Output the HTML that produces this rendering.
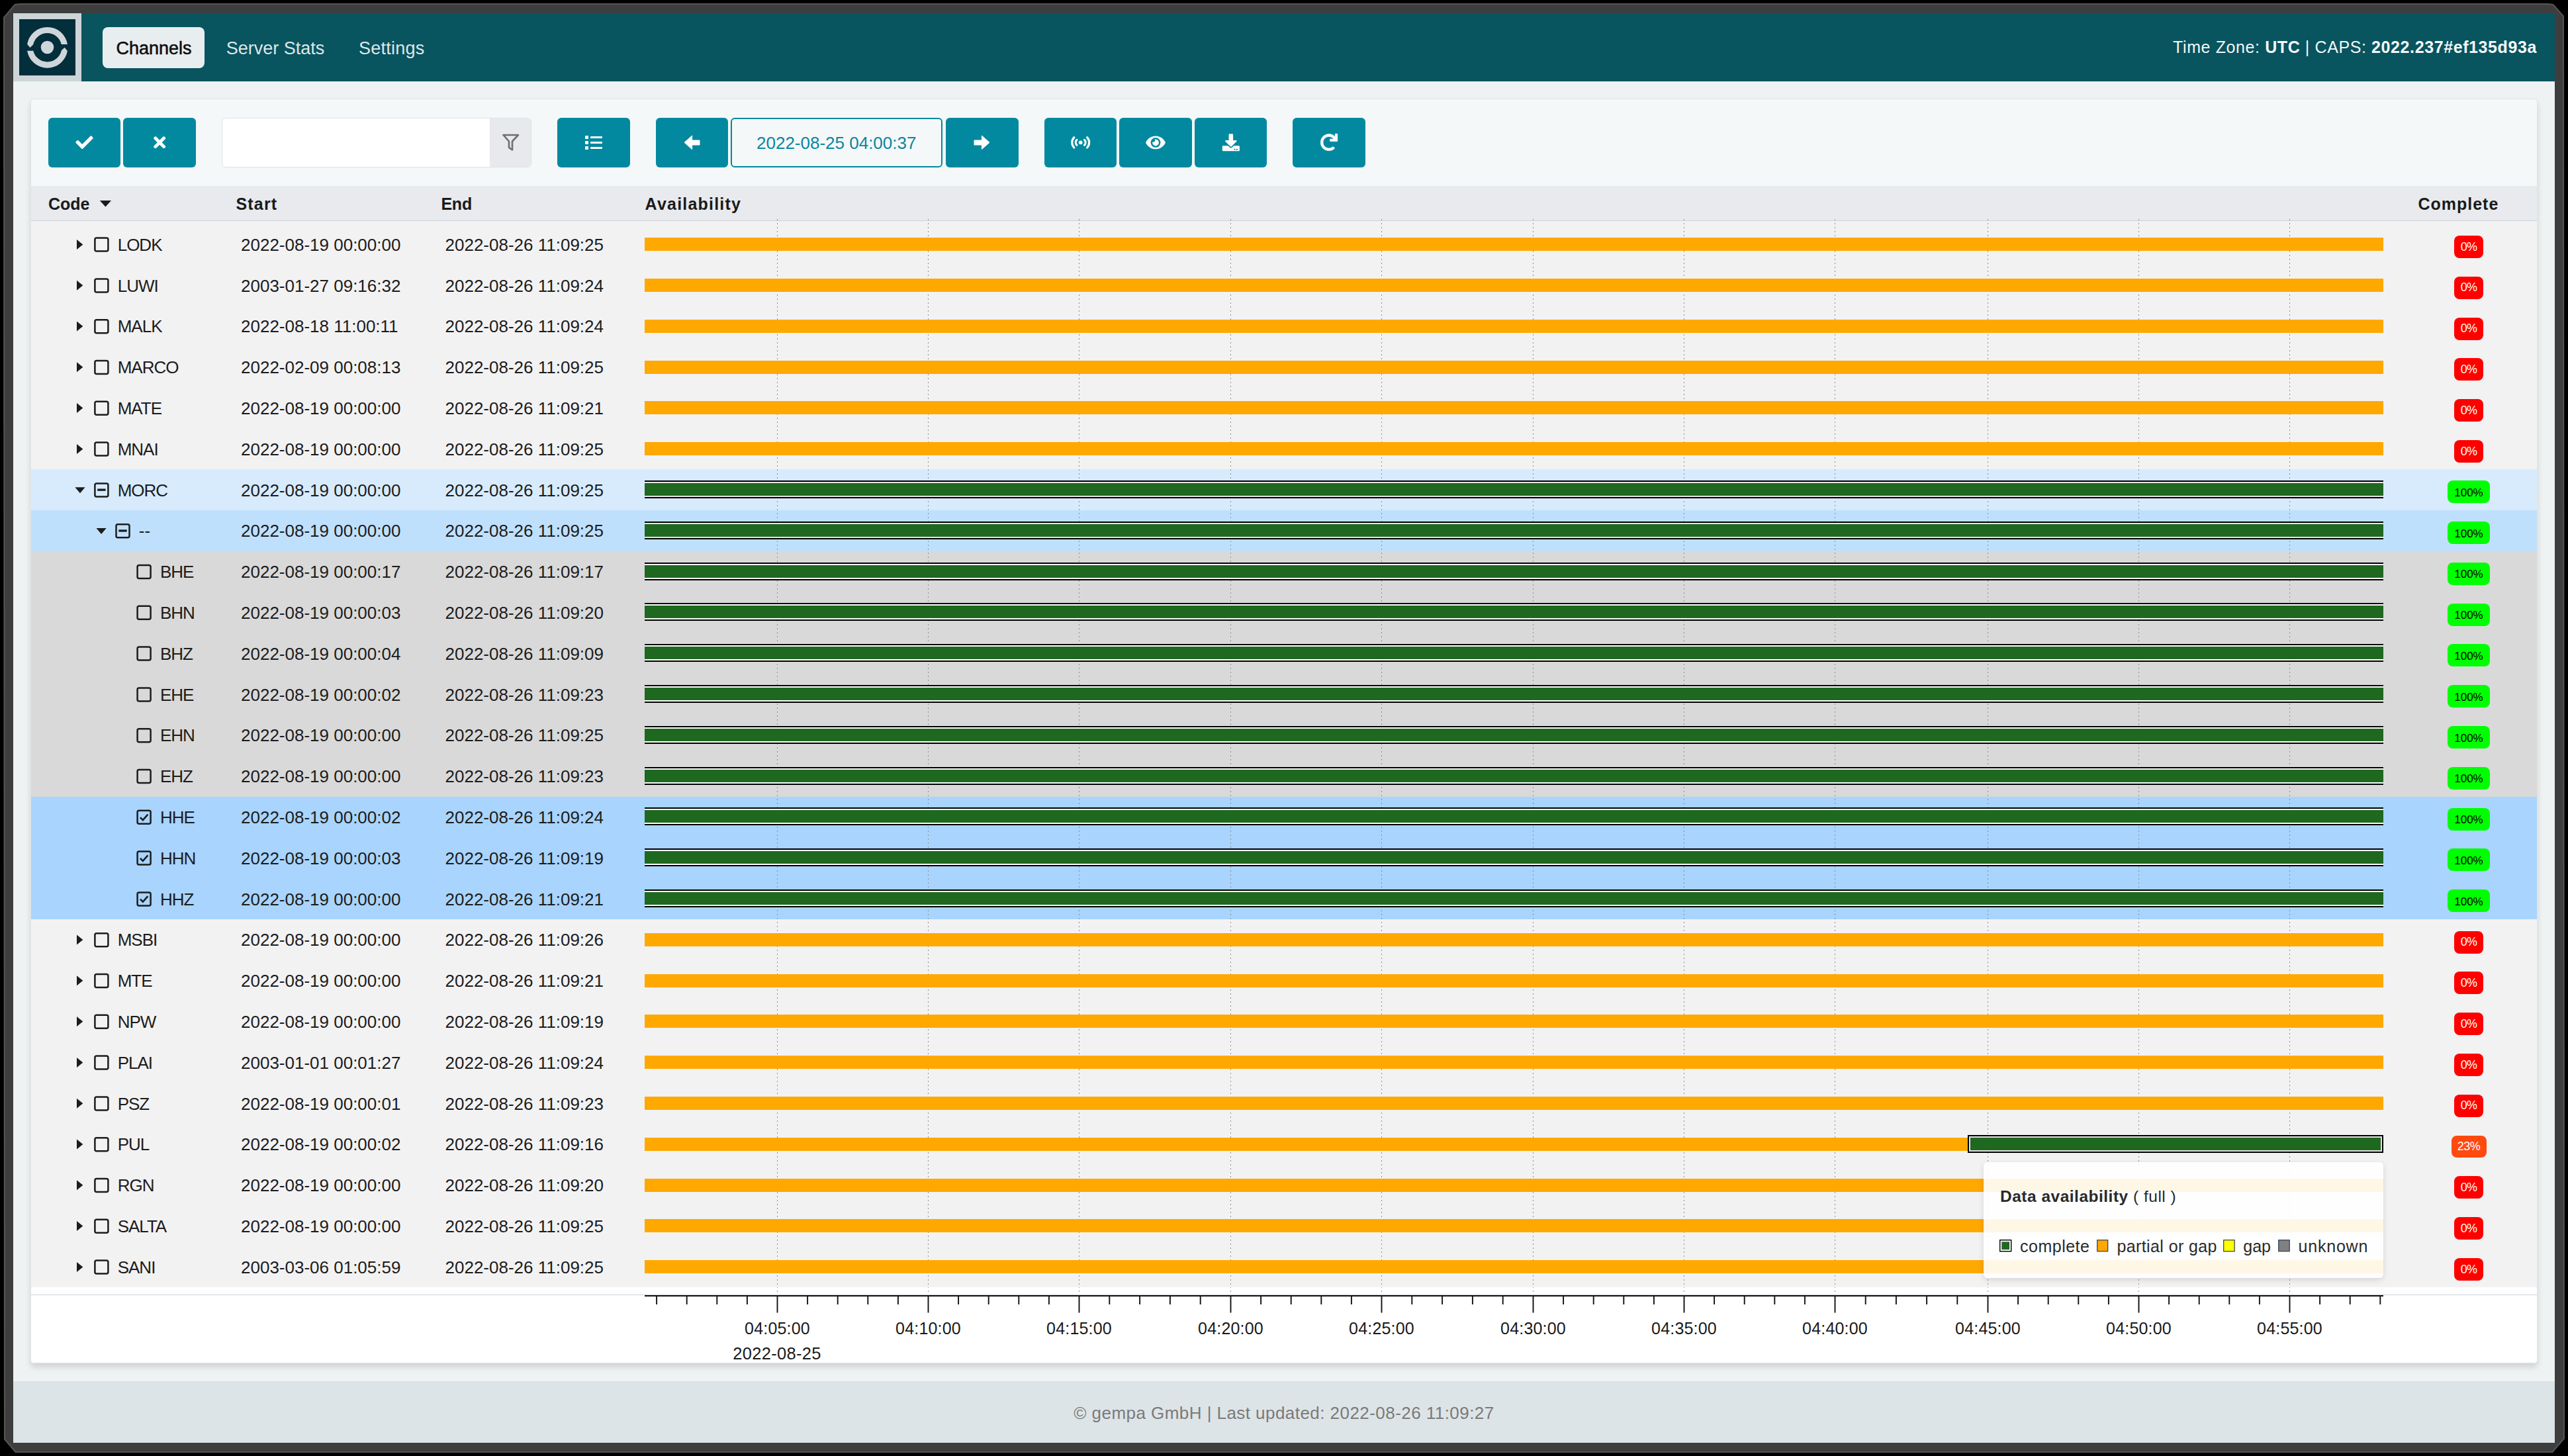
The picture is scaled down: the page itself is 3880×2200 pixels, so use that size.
<!DOCTYPE html><html><head><meta charset="utf-8"><title>Channels</title><style>
html,body{margin:0;padding:0;width:3880px;height:2200px;overflow:hidden;background:#000;font-family:"Liberation Sans", sans-serif;}
.t{position:absolute;white-space:nowrap;}
.r{position:absolute;}
svg{position:absolute;overflow:visible;}
</style></head><body>
<svg style="left:0;top:0" width="3880" height="2200" viewBox="0 0 3880 2200"><polygon points="5,26 22,6 31,5 3849,5 3858,6 3874,24 3875,2174 3857,2195 23,2195 6,2175" fill="#555"/><polygon points="7,27 23,8 32,7 3848,7 3857,8 3872,25 3873,2173 3856,2193 24,2193 8,2174" fill="#3e3e3e"/></svg>
<div class="r" style="left:20px;top:20px;width:3840px;height:2160px;background:#eef2f2;"></div>
<div class="r" style="left:20px;top:20px;width:3840px;height:103px;background:#08545f;"></div>
<div class="r" style="left:20px;top:20px;width:103px;height:103px;background:#cdd5d8;"></div>
<div class="r" style="left:29px;top:29px;width:85px;height:85px;background:#032e3b;"></div>
<svg style="left:0;top:0" width="3880" height="130" viewBox="0 0 3880 130">
<g fill="#cfd6d9">
<path d="M 101.9 66.9 A 30.8 30.8 0 0 0 41.1 66.7 L 45.4 71.9 L 50.2 67.3 A 21.8 21.8 0 0 1 92.74 66.9 Z"/>
<path d="M 41.1 76.7 A 30.8 30.8 0 0 0 101.9 76.9 L 97.6 71.7 L 92.8 76.3 A 21.8 21.8 0 0 1 50.26 76.7 Z"/>
</g>
<circle cx="71.5" cy="71.5" r="9.8" fill="#cfd6d9"/>
</svg>
<div class="r" style="left:155px;top:41px;width:154px;height:62px;background:#e8eef0;border-radius:8px;"></div>
<div class="t" style="left:175.5px;top:59.54px;font-size:27px;line-height:27px;color:#0d0d0d;font-weight:400;letter-spacing:0px;-webkit-text-stroke:0.55px #0d0d0d;">Channels</div>
<div class="t" style="left:341.8px;top:59.54px;font-size:27px;line-height:27px;color:#dfe6e8;font-weight:400;letter-spacing:0px;">Server Stats</div>
<div class="t" style="left:542px;top:59.54px;font-size:27px;line-height:27px;color:#dfe6e8;font-weight:400;letter-spacing:0.25px;">Settings</div>
<div class="t" style="right:47px;top:59.44px;font-size:25px;line-height:25px;color:#f4f7f8;font-weight:400;letter-spacing:0.6px;">Time Zone: <b>UTC</b> | CAPS: <b>2022.237#ef135d93a</b></div>
<div class="r" style="left:46px;top:149px;width:3788px;height:1911px;background:#f4f8f8;border:1px solid #e2e4e8;box-sizing:border-box;border-radius:5px;box-shadow:0 6px 10px rgba(0,0,0,0.13);"></div>
<div class="r" style="left:73px;top:178px;width:109px;height:75px;background:#0289a0;border-radius:6px;"></div>
<div class="r" style="left:186px;top:178px;width:110px;height:75px;background:#0289a0;border-radius:6px;"></div>
<div class="r" style="left:335px;top:178px;width:468px;height:75px;background:#ffffff;border:1px solid #dfe2e6;box-sizing:border-box;border-radius:6px;"></div>
<div class="r" style="left:740px;top:179px;width:62px;height:73px;background:#e8e9ed;border-radius:0 5px 5px 0;"></div>
<div class="r" style="left:842px;top:178px;width:110px;height:75px;background:#0289a0;border-radius:6px;"></div>
<div class="r" style="left:991px;top:178px;width:109px;height:75px;background:#0289a0;border-radius:6px;"></div>
<div class="r" style="left:1104px;top:178px;width:320px;height:75px;background:#f4f8f8;border:2px solid #0289a0;box-sizing:border-box;border-radius:6px;"></div>
<div class="t" style="left:1143px;top:202.79px;font-size:26px;line-height:26px;color:#0a86a0;font-weight:400;letter-spacing:0px;">2022-08-25 04:00:37</div>
<div class="r" style="left:1429px;top:178px;width:110px;height:75px;background:#0289a0;border-radius:6px;"></div>
<div class="r" style="left:1578px;top:178px;width:109px;height:75px;background:#0289a0;border-radius:6px;"></div>
<div class="r" style="left:1691px;top:178px;width:110px;height:75px;background:#0289a0;border-radius:6px;"></div>
<div class="r" style="left:1805px;top:178px;width:109px;height:75px;background:#0289a0;border-radius:6px;"></div>
<div class="r" style="left:1953px;top:178px;width:110px;height:75px;background:#0289a0;border-radius:6px;"></div>
<svg style="left:0;top:0" width="3880" height="300" viewBox="0 0 3880 300">
<path transform="translate(114.3,202.0) scale(0.0515)" fill="#fff" d="M173.898 439.404l-166.4-166.4c-9.997-9.997-9.997-26.206 0-36.204l36.203-36.204c9.997-9.998 26.207-9.998 36.204 0L192 312.69 432.095 72.596c9.997-9.997 26.207-9.997 36.204 0l36.203 36.204c9.997 9.997 9.997 26.206 0 36.204l-294.4 294.401c-9.998 9.997-26.207 9.997-36.204-.001z"/>
<path transform="translate(232.1,202.0) scale(0.0517)" fill="#fff" d="M242.72 256l100.07-100.07c12.28-12.28 12.28-32.19 0-44.48l-22.24-22.24c-12.28-12.28-32.19-12.28-44.48 0L176 189.28 75.93 89.21c-12.28-12.28-32.19-12.28-44.48 0L9.21 111.45c-12.28 12.28-12.28 32.19 0 44.48L109.28 256 9.21 356.07c-12.28 12.28-12.28 32.19 0 44.48l22.24 22.240c12.28 12.28 32.2 12.28 44.48 0L176 322.72l100.07 100.07c12.28 12.28 32.2 12.28 44.48 0l22.24-22.24c12.28-12.28 12.28-32.19 0-44.48L242.72 256z"/>
<path d="M 760.5 204 L 783 204 L 774 213.5 L 774 226.5 L 769 223 L 769 213.5 Z" fill="none" stroke="#6f6f6f" stroke-width="2.6" stroke-linejoin="round"/>
<g fill="#fff"><rect x="884" y="205" width="5" height="5" rx="0.8"/><rect x="884" y="213" width="5" height="5" rx="0.8"/><rect x="884" y="221" width="5" height="5" rx="0.8"/>
<rect x="892" y="206" width="18" height="3" rx="1"/><rect x="892" y="214" width="18" height="3" rx="1"/><rect x="892" y="222" width="18" height="3" rx="1"/></g>
<polygon points="1034,215.3 1045.6,205 1045.6,212 1057,212 1057,219 1045.6,219 1045.6,225.6" fill="#fff" stroke="#fff" stroke-width="1" stroke-linejoin="round"/>
<polygon points="1495,215.3 1483.4,205 1483.4,212 1472,212 1472,219 1483.4,219 1483.4,225.6" fill="#fff" stroke="#fff" stroke-width="1" stroke-linejoin="round"/>
<g fill="none" stroke="#fff" stroke-width="3.2" stroke-linecap="round">
<path d="M 1622.8 207.6 A 11.3 11.3 0 0 0 1622.8 223"/>
<path d="M 1626.9 211.4 A 5.6 5.6 0 0 0 1626.9 219.2"/>
<path d="M 1642.6 207.6 A 11.3 11.3 0 0 1 1642.6 223"/>
<path d="M 1638.5 211.4 A 5.6 5.6 0 0 1 1638.5 219.2"/>
</g>
<circle cx="1632.7" cy="215.3" r="2.9" fill="#fff"/>
<path transform="translate(1731.2,202.3) scale(0.0514)" fill="#fff" d="M572.52 241.4C518.29 135.59 410.93 64 288 64S57.68 135.64 3.48 241.41a32.35 32.35 0 0 0 0 29.19C57.71 376.41 165.07 448 288 448s230.32-71.64 284.52-177.41a32.35 32.350 0 0 0 0-29.19zM288 400a144 144 0 1 1 144-144 143.93 143.93 0 0 1-144 144zm0-240a95.31 95.31 0 0 0-25.31 3.790 47.85 47.85 0 0 1-66.9 66.9A95.78 95.78 0 1 0 288 160z"/>
<path transform="translate(1846.8,202.2) scale(0.0510)" fill="#fff" d="M216 0h80c13.3 0 24 10.7 24 24v168h87.7c17.8 0 26.7 21.5 14.1 34.1L269.7 378.3c-7.5 7.5-19.8 7.5-27.3 0L90.1 226.1c-12.6-12.6-3.7-34.1 14.1-34.1H192V24c0-13.3 10.7-24 24-24zm296 376v112c0 13.3-10.7 24-24 24H24c-13.3 0-24-10.7-24-24V376c0-13.3 10.7-24 24-24h146.7l49 49c20.1 20.1 52.5 20.1 72.6 0l49-49H488c13.3 0 24 10.7 24 24zm-124 88c0-11-9-20-20-20s-20 9-20 20 9 20 20 20 20-9 20-20zm64 0c0-11-9-20-20-20s-20 9-20 20 9 20 20 20 20-9 20-20z"/>
<path transform="translate(1994.9,202.2) scale(0.0506)" fill="#fff" stroke="#fff" stroke-width="14" d="M500.33 0h-47.41a12 12 0 0 0-12 12.57l4 82.76A247.42 247.42 0 0 0 256 8C119.34 8 7.9 119.53 8 256.19 8.1 393.07 119.1 504 256 504a247.1 247.1 0 0 0 166.18-63.910 12 12 0 0 0 .48-17.43l-34-34a12 12 0 0 0-16.38-.55A176 176 0 1 1 402.1 157.8l-101.53-4.87a12 12 0 0 0-12.57 12v47.41a12 12 0 0 0 12 12h200.33a12 12 0 0 0 12-12V12a12 12 0 0 0-12-12z"/>
</svg>
<div class="r" style="left:47px;top:281px;width:3786px;height:52px;background:#e8eaee;"></div>
<div class="r" style="left:47px;top:333px;width:3786px;height:1px;background:#cdd3da;"></div>
<div class="t" style="left:73px;top:295.84px;font-size:25px;line-height:25px;color:#1a1a1a;font-weight:700;letter-spacing:0px;">Code</div>
<svg style="left:0;top:0" width="200" height="330"><polygon points="150.8,303 168,303 159.4,312.5" fill="#1a1a1a"/></svg>
<div class="t" style="left:356.4px;top:295.84px;font-size:25px;line-height:25px;color:#1a1a1a;font-weight:700;letter-spacing:1.2px;">Start</div>
<div class="t" style="left:666.4px;top:295.84px;font-size:25px;line-height:25px;color:#1a1a1a;font-weight:700;letter-spacing:-0.2px;">End</div>
<div class="t" style="left:974.6px;top:295.84px;font-size:25px;line-height:25px;color:#1a1a1a;font-weight:700;letter-spacing:1.2px;">Availability</div>
<div class="t" style="left:3653.4px;top:295.84px;font-size:25px;line-height:25px;color:#1a1a1a;font-weight:700;letter-spacing:1.0px;">Complete</div>
<div class="r" style="left:47px;top:334px;width:3786px;height:1611px;background:#f2f2f3;"></div>
<div class="r" style="left:47px;top:709px;width:3786px;height:62px;background:#d7ebfd;"></div>
<div class="r" style="left:47px;top:771px;width:3786px;height:62px;background:#bfe0fc;"></div>
<div class="r" style="left:47px;top:833px;width:3786px;height:62px;background:#d9d9d9;"></div>
<div class="r" style="left:47px;top:895px;width:3786px;height:61px;background:#d9d9d9;"></div>
<div class="r" style="left:47px;top:956px;width:3786px;height:62px;background:#d9d9d9;"></div>
<div class="r" style="left:47px;top:1018px;width:3786px;height:62px;background:#d9d9d9;"></div>
<div class="r" style="left:47px;top:1080px;width:3786px;height:62px;background:#d9d9d9;"></div>
<div class="r" style="left:47px;top:1142px;width:3786px;height:62px;background:#d9d9d9;"></div>
<div class="r" style="left:47px;top:1204px;width:3786px;height:62px;background:#a8d4fd;"></div>
<div class="r" style="left:47px;top:1266px;width:3786px;height:61px;background:#a8d4fd;"></div>
<div class="r" style="left:47px;top:1327px;width:3786px;height:62px;background:#a8d4fd;"></div>
<div class="r" style="left:1174px;top:331px;width:1px;height:1626px;background:repeating-linear-gradient(to bottom,#8e8e8e 0 2px,transparent 2px 6px);"></div>
<div class="r" style="left:1402px;top:331px;width:1px;height:1626px;background:repeating-linear-gradient(to bottom,#8e8e8e 0 2px,transparent 2px 6px);"></div>
<div class="r" style="left:1630px;top:331px;width:1px;height:1626px;background:repeating-linear-gradient(to bottom,#8e8e8e 0 2px,transparent 2px 6px);"></div>
<div class="r" style="left:1859px;top:331px;width:1px;height:1626px;background:repeating-linear-gradient(to bottom,#8e8e8e 0 2px,transparent 2px 6px);"></div>
<div class="r" style="left:2087px;top:331px;width:1px;height:1626px;background:repeating-linear-gradient(to bottom,#8e8e8e 0 2px,transparent 2px 6px);"></div>
<div class="r" style="left:2316px;top:331px;width:1px;height:1626px;background:repeating-linear-gradient(to bottom,#8e8e8e 0 2px,transparent 2px 6px);"></div>
<div class="r" style="left:2544px;top:331px;width:1px;height:1626px;background:repeating-linear-gradient(to bottom,#8e8e8e 0 2px,transparent 2px 6px);"></div>
<div class="r" style="left:2772px;top:331px;width:1px;height:1626px;background:repeating-linear-gradient(to bottom,#8e8e8e 0 2px,transparent 2px 6px);"></div>
<div class="r" style="left:3003px;top:331px;width:1px;height:1626px;background:repeating-linear-gradient(to bottom,#8e8e8e 0 2px,transparent 2px 6px);"></div>
<div class="r" style="left:3231px;top:331px;width:1px;height:1626px;background:repeating-linear-gradient(to bottom,#8e8e8e 0 2px,transparent 2px 6px);"></div>
<div class="r" style="left:3459px;top:331px;width:1px;height:1626px;background:repeating-linear-gradient(to bottom,#8e8e8e 0 2px,transparent 2px 6px);"></div>
<div class="t" style="left:177.7px;top:356.89px;font-size:26px;line-height:26px;color:#1c1c1c;font-weight:400;letter-spacing:-1px;">LODK</div>
<div class="t" style="left:364px;top:356.89px;font-size:26px;line-height:26px;color:#1c1c1c;font-weight:400;letter-spacing:0px;">2022-08-19 00:00:00</div>
<div class="t" style="left:672.5px;top:356.89px;font-size:26px;line-height:26px;color:#1c1c1c;font-weight:400;letter-spacing:0px;">2022-08-26 11:09:25</div>
<div class="r" style="left:974px;top:359.1px;width:2627px;height:20px;background:#ffa800;"></div>
<div class="r" style="left:3708px;top:355.9px;width:44px;height:34px;background:#ff0000;border-radius:8px;"></div>
<div class="t" style="left:3730px;transform:translateX(-50%);top:363.66px;font-size:18px;line-height:18px;color:#fff;font-weight:400;letter-spacing:-0.8px;">0%</div>
<div class="t" style="left:177.7px;top:418.69px;font-size:26px;line-height:26px;color:#1c1c1c;font-weight:400;letter-spacing:-1px;">LUWI</div>
<div class="t" style="left:364px;top:418.69px;font-size:26px;line-height:26px;color:#1c1c1c;font-weight:400;letter-spacing:0px;">2003-01-27 09:16:32</div>
<div class="t" style="left:672.5px;top:418.69px;font-size:26px;line-height:26px;color:#1c1c1c;font-weight:400;letter-spacing:0px;">2022-08-26 11:09:24</div>
<div class="r" style="left:974px;top:420.9px;width:2627px;height:20px;background:#ffa800;"></div>
<div class="r" style="left:3708px;top:417.7px;width:44px;height:34px;background:#ff0000;border-radius:8px;"></div>
<div class="t" style="left:3730px;transform:translateX(-50%);top:425.46px;font-size:18px;line-height:18px;color:#fff;font-weight:400;letter-spacing:-0.8px;">0%</div>
<div class="t" style="left:177.7px;top:480.49px;font-size:26px;line-height:26px;color:#1c1c1c;font-weight:400;letter-spacing:-1px;">MALK</div>
<div class="t" style="left:364px;top:480.49px;font-size:26px;line-height:26px;color:#1c1c1c;font-weight:400;letter-spacing:0px;">2022-08-18 11:00:11</div>
<div class="t" style="left:672.5px;top:480.49px;font-size:26px;line-height:26px;color:#1c1c1c;font-weight:400;letter-spacing:0px;">2022-08-26 11:09:24</div>
<div class="r" style="left:974px;top:482.7px;width:2627px;height:20px;background:#ffa800;"></div>
<div class="r" style="left:3708px;top:479.5px;width:44px;height:34px;background:#ff0000;border-radius:8px;"></div>
<div class="t" style="left:3730px;transform:translateX(-50%);top:487.26px;font-size:18px;line-height:18px;color:#fff;font-weight:400;letter-spacing:-0.8px;">0%</div>
<div class="t" style="left:177.7px;top:542.29px;font-size:26px;line-height:26px;color:#1c1c1c;font-weight:400;letter-spacing:-1px;">MARCO</div>
<div class="t" style="left:364px;top:542.29px;font-size:26px;line-height:26px;color:#1c1c1c;font-weight:400;letter-spacing:0px;">2022-02-09 00:08:13</div>
<div class="t" style="left:672.5px;top:542.29px;font-size:26px;line-height:26px;color:#1c1c1c;font-weight:400;letter-spacing:0px;">2022-08-26 11:09:25</div>
<div class="r" style="left:974px;top:544.5px;width:2627px;height:20px;background:#ffa800;"></div>
<div class="r" style="left:3708px;top:541.3px;width:44px;height:34px;background:#ff0000;border-radius:8px;"></div>
<div class="t" style="left:3730px;transform:translateX(-50%);top:549.06px;font-size:18px;line-height:18px;color:#fff;font-weight:400;letter-spacing:-0.8px;">0%</div>
<div class="t" style="left:177.7px;top:604.09px;font-size:26px;line-height:26px;color:#1c1c1c;font-weight:400;letter-spacing:-1px;">MATE</div>
<div class="t" style="left:364px;top:604.09px;font-size:26px;line-height:26px;color:#1c1c1c;font-weight:400;letter-spacing:0px;">2022-08-19 00:00:00</div>
<div class="t" style="left:672.5px;top:604.09px;font-size:26px;line-height:26px;color:#1c1c1c;font-weight:400;letter-spacing:0px;">2022-08-26 11:09:21</div>
<div class="r" style="left:974px;top:606.3px;width:2627px;height:20px;background:#ffa800;"></div>
<div class="r" style="left:3708px;top:603.1px;width:44px;height:34px;background:#ff0000;border-radius:8px;"></div>
<div class="t" style="left:3730px;transform:translateX(-50%);top:610.86px;font-size:18px;line-height:18px;color:#fff;font-weight:400;letter-spacing:-0.8px;">0%</div>
<div class="t" style="left:177.7px;top:665.89px;font-size:26px;line-height:26px;color:#1c1c1c;font-weight:400;letter-spacing:-1px;">MNAI</div>
<div class="t" style="left:364px;top:665.89px;font-size:26px;line-height:26px;color:#1c1c1c;font-weight:400;letter-spacing:0px;">2022-08-19 00:00:00</div>
<div class="t" style="left:672.5px;top:665.89px;font-size:26px;line-height:26px;color:#1c1c1c;font-weight:400;letter-spacing:0px;">2022-08-26 11:09:25</div>
<div class="r" style="left:974px;top:668.1px;width:2627px;height:20px;background:#ffa800;"></div>
<div class="r" style="left:3708px;top:664.9px;width:44px;height:34px;background:#ff0000;border-radius:8px;"></div>
<div class="t" style="left:3730px;transform:translateX(-50%);top:672.66px;font-size:18px;line-height:18px;color:#fff;font-weight:400;letter-spacing:-0.8px;">0%</div>
<div class="t" style="left:177.7px;top:727.69px;font-size:26px;line-height:26px;color:#1c1c1c;font-weight:400;letter-spacing:-1px;">MORC</div>
<div class="t" style="left:364px;top:727.69px;font-size:26px;line-height:26px;color:#1c1c1c;font-weight:400;letter-spacing:0px;">2022-08-19 00:00:00</div>
<div class="t" style="left:672.5px;top:727.69px;font-size:26px;line-height:26px;color:#1c1c1c;font-weight:400;letter-spacing:0px;">2022-08-26 11:09:25</div>
<div class="r" style="left:974px;top:725.9px;width:2627px;height:27px;background:linear-gradient(to bottom,#000 0 2px,#e9e5e5 2px 4px,#1f6820 4px 23px,#e9e5e5 23px 25px,#000 25px 27px);"></div>
<div class="r" style="left:3698px;top:726.2px;width:64px;height:34px;background:#00ff00;border-radius:8px;"></div>
<div class="t" style="left:3730px;transform:translateX(-50%);top:735.81px;font-size:17px;line-height:17px;color:#000;font-weight:400;letter-spacing:0px;">100%</div>
<div class="t" style="left:209.8px;top:789.49px;font-size:26px;line-height:26px;color:#1c1c1c;font-weight:400;letter-spacing:0px;">--</div>
<div class="t" style="left:364px;top:789.49px;font-size:26px;line-height:26px;color:#1c1c1c;font-weight:400;letter-spacing:0px;">2022-08-19 00:00:00</div>
<div class="t" style="left:672.5px;top:789.49px;font-size:26px;line-height:26px;color:#1c1c1c;font-weight:400;letter-spacing:0px;">2022-08-26 11:09:25</div>
<div class="r" style="left:974px;top:787.7px;width:2627px;height:27px;background:linear-gradient(to bottom,#000 0 2px,#e9e5e5 2px 4px,#1f6820 4px 23px,#e9e5e5 23px 25px,#000 25px 27px);"></div>
<div class="r" style="left:3698px;top:788.0px;width:64px;height:34px;background:#00ff00;border-radius:8px;"></div>
<div class="t" style="left:3730px;transform:translateX(-50%);top:797.61px;font-size:17px;line-height:17px;color:#000;font-weight:400;letter-spacing:0px;">100%</div>
<div class="t" style="left:241.9px;top:851.29px;font-size:26px;line-height:26px;color:#1c1c1c;font-weight:400;letter-spacing:-1px;">BHE</div>
<div class="t" style="left:364px;top:851.29px;font-size:26px;line-height:26px;color:#1c1c1c;font-weight:400;letter-spacing:0px;">2022-08-19 00:00:17</div>
<div class="t" style="left:672.5px;top:851.29px;font-size:26px;line-height:26px;color:#1c1c1c;font-weight:400;letter-spacing:0px;">2022-08-26 11:09:17</div>
<div class="r" style="left:974px;top:849.5px;width:2627px;height:27px;background:linear-gradient(to bottom,#000 0 2px,#ffffff 2px 4px,#1f6820 4px 23px,#ffffff 23px 25px,#000 25px 27px);"></div>
<div class="r" style="left:3698px;top:849.8px;width:64px;height:34px;background:#00ff00;border-radius:8px;"></div>
<div class="t" style="left:3730px;transform:translateX(-50%);top:859.41px;font-size:17px;line-height:17px;color:#000;font-weight:400;letter-spacing:0px;">100%</div>
<div class="t" style="left:241.9px;top:913.09px;font-size:26px;line-height:26px;color:#1c1c1c;font-weight:400;letter-spacing:-1px;">BHN</div>
<div class="t" style="left:364px;top:913.09px;font-size:26px;line-height:26px;color:#1c1c1c;font-weight:400;letter-spacing:0px;">2022-08-19 00:00:03</div>
<div class="t" style="left:672.5px;top:913.09px;font-size:26px;line-height:26px;color:#1c1c1c;font-weight:400;letter-spacing:0px;">2022-08-26 11:09:20</div>
<div class="r" style="left:974px;top:911.3px;width:2627px;height:27px;background:linear-gradient(to bottom,#000 0 2px,#ffffff 2px 4px,#1f6820 4px 23px,#ffffff 23px 25px,#000 25px 27px);"></div>
<div class="r" style="left:3698px;top:911.6px;width:64px;height:34px;background:#00ff00;border-radius:8px;"></div>
<div class="t" style="left:3730px;transform:translateX(-50%);top:921.21px;font-size:17px;line-height:17px;color:#000;font-weight:400;letter-spacing:0px;">100%</div>
<div class="t" style="left:241.9px;top:974.89px;font-size:26px;line-height:26px;color:#1c1c1c;font-weight:400;letter-spacing:-1px;">BHZ</div>
<div class="t" style="left:364px;top:974.89px;font-size:26px;line-height:26px;color:#1c1c1c;font-weight:400;letter-spacing:0px;">2022-08-19 00:00:04</div>
<div class="t" style="left:672.5px;top:974.89px;font-size:26px;line-height:26px;color:#1c1c1c;font-weight:400;letter-spacing:0px;">2022-08-26 11:09:09</div>
<div class="r" style="left:974px;top:973.1px;width:2627px;height:27px;background:linear-gradient(to bottom,#000 0 2px,#ffffff 2px 4px,#1f6820 4px 23px,#ffffff 23px 25px,#000 25px 27px);"></div>
<div class="r" style="left:3698px;top:973.4px;width:64px;height:34px;background:#00ff00;border-radius:8px;"></div>
<div class="t" style="left:3730px;transform:translateX(-50%);top:983.01px;font-size:17px;line-height:17px;color:#000;font-weight:400;letter-spacing:0px;">100%</div>
<div class="t" style="left:241.9px;top:1036.69px;font-size:26px;line-height:26px;color:#1c1c1c;font-weight:400;letter-spacing:-1px;">EHE</div>
<div class="t" style="left:364px;top:1036.69px;font-size:26px;line-height:26px;color:#1c1c1c;font-weight:400;letter-spacing:0px;">2022-08-19 00:00:02</div>
<div class="t" style="left:672.5px;top:1036.69px;font-size:26px;line-height:26px;color:#1c1c1c;font-weight:400;letter-spacing:0px;">2022-08-26 11:09:23</div>
<div class="r" style="left:974px;top:1034.9px;width:2627px;height:27px;background:linear-gradient(to bottom,#000 0 2px,#ffffff 2px 4px,#1f6820 4px 23px,#ffffff 23px 25px,#000 25px 27px);"></div>
<div class="r" style="left:3698px;top:1035.2px;width:64px;height:34px;background:#00ff00;border-radius:8px;"></div>
<div class="t" style="left:3730px;transform:translateX(-50%);top:1044.81px;font-size:17px;line-height:17px;color:#000;font-weight:400;letter-spacing:0px;">100%</div>
<div class="t" style="left:241.9px;top:1098.49px;font-size:26px;line-height:26px;color:#1c1c1c;font-weight:400;letter-spacing:-1px;">EHN</div>
<div class="t" style="left:364px;top:1098.49px;font-size:26px;line-height:26px;color:#1c1c1c;font-weight:400;letter-spacing:0px;">2022-08-19 00:00:00</div>
<div class="t" style="left:672.5px;top:1098.49px;font-size:26px;line-height:26px;color:#1c1c1c;font-weight:400;letter-spacing:0px;">2022-08-26 11:09:25</div>
<div class="r" style="left:974px;top:1096.7px;width:2627px;height:27px;background:linear-gradient(to bottom,#000 0 2px,#ffffff 2px 4px,#1f6820 4px 23px,#ffffff 23px 25px,#000 25px 27px);"></div>
<div class="r" style="left:3698px;top:1097.0px;width:64px;height:34px;background:#00ff00;border-radius:8px;"></div>
<div class="t" style="left:3730px;transform:translateX(-50%);top:1106.61px;font-size:17px;line-height:17px;color:#000;font-weight:400;letter-spacing:0px;">100%</div>
<div class="t" style="left:241.9px;top:1160.29px;font-size:26px;line-height:26px;color:#1c1c1c;font-weight:400;letter-spacing:-1px;">EHZ</div>
<div class="t" style="left:364px;top:1160.29px;font-size:26px;line-height:26px;color:#1c1c1c;font-weight:400;letter-spacing:0px;">2022-08-19 00:00:00</div>
<div class="t" style="left:672.5px;top:1160.29px;font-size:26px;line-height:26px;color:#1c1c1c;font-weight:400;letter-spacing:0px;">2022-08-26 11:09:23</div>
<div class="r" style="left:974px;top:1158.5px;width:2627px;height:27px;background:linear-gradient(to bottom,#000 0 2px,#ffffff 2px 4px,#1f6820 4px 23px,#ffffff 23px 25px,#000 25px 27px);"></div>
<div class="r" style="left:3698px;top:1158.8px;width:64px;height:34px;background:#00ff00;border-radius:8px;"></div>
<div class="t" style="left:3730px;transform:translateX(-50%);top:1168.41px;font-size:17px;line-height:17px;color:#000;font-weight:400;letter-spacing:0px;">100%</div>
<div class="t" style="left:241.9px;top:1222.09px;font-size:26px;line-height:26px;color:#1c1c1c;font-weight:400;letter-spacing:-1px;">HHE</div>
<div class="t" style="left:364px;top:1222.09px;font-size:26px;line-height:26px;color:#1c1c1c;font-weight:400;letter-spacing:0px;">2022-08-19 00:00:02</div>
<div class="t" style="left:672.5px;top:1222.09px;font-size:26px;line-height:26px;color:#1c1c1c;font-weight:400;letter-spacing:0px;">2022-08-26 11:09:24</div>
<div class="r" style="left:974px;top:1220.3px;width:2627px;height:27px;background:linear-gradient(to bottom,#000 0 2px,#ffffff 2px 4px,#1f6820 4px 23px,#ffffff 23px 25px,#000 25px 27px);"></div>
<div class="r" style="left:3698px;top:1220.6px;width:64px;height:34px;background:#00ff00;border-radius:8px;"></div>
<div class="t" style="left:3730px;transform:translateX(-50%);top:1230.21px;font-size:17px;line-height:17px;color:#000;font-weight:400;letter-spacing:0px;">100%</div>
<div class="t" style="left:241.9px;top:1283.89px;font-size:26px;line-height:26px;color:#1c1c1c;font-weight:400;letter-spacing:-1px;">HHN</div>
<div class="t" style="left:364px;top:1283.89px;font-size:26px;line-height:26px;color:#1c1c1c;font-weight:400;letter-spacing:0px;">2022-08-19 00:00:03</div>
<div class="t" style="left:672.5px;top:1283.89px;font-size:26px;line-height:26px;color:#1c1c1c;font-weight:400;letter-spacing:0px;">2022-08-26 11:09:19</div>
<div class="r" style="left:974px;top:1282.1px;width:2627px;height:27px;background:linear-gradient(to bottom,#000 0 2px,#ffffff 2px 4px,#1f6820 4px 23px,#ffffff 23px 25px,#000 25px 27px);"></div>
<div class="r" style="left:3698px;top:1282.4px;width:64px;height:34px;background:#00ff00;border-radius:8px;"></div>
<div class="t" style="left:3730px;transform:translateX(-50%);top:1292.01px;font-size:17px;line-height:17px;color:#000;font-weight:400;letter-spacing:0px;">100%</div>
<div class="t" style="left:241.9px;top:1345.69px;font-size:26px;line-height:26px;color:#1c1c1c;font-weight:400;letter-spacing:-1px;">HHZ</div>
<div class="t" style="left:364px;top:1345.69px;font-size:26px;line-height:26px;color:#1c1c1c;font-weight:400;letter-spacing:0px;">2022-08-19 00:00:00</div>
<div class="t" style="left:672.5px;top:1345.69px;font-size:26px;line-height:26px;color:#1c1c1c;font-weight:400;letter-spacing:0px;">2022-08-26 11:09:21</div>
<div class="r" style="left:974px;top:1343.9px;width:2627px;height:27px;background:linear-gradient(to bottom,#000 0 2px,#ffffff 2px 4px,#1f6820 4px 23px,#ffffff 23px 25px,#000 25px 27px);"></div>
<div class="r" style="left:3698px;top:1344.2px;width:64px;height:34px;background:#00ff00;border-radius:8px;"></div>
<div class="t" style="left:3730px;transform:translateX(-50%);top:1353.81px;font-size:17px;line-height:17px;color:#000;font-weight:400;letter-spacing:0px;">100%</div>
<div class="t" style="left:177.7px;top:1407.49px;font-size:26px;line-height:26px;color:#1c1c1c;font-weight:400;letter-spacing:-1px;">MSBI</div>
<div class="t" style="left:364px;top:1407.49px;font-size:26px;line-height:26px;color:#1c1c1c;font-weight:400;letter-spacing:0px;">2022-08-19 00:00:00</div>
<div class="t" style="left:672.5px;top:1407.49px;font-size:26px;line-height:26px;color:#1c1c1c;font-weight:400;letter-spacing:0px;">2022-08-26 11:09:26</div>
<div class="r" style="left:974px;top:1409.7px;width:2627px;height:20px;background:#ffa800;"></div>
<div class="r" style="left:3708px;top:1406.5px;width:44px;height:34px;background:#ff0000;border-radius:8px;"></div>
<div class="t" style="left:3730px;transform:translateX(-50%);top:1414.26px;font-size:18px;line-height:18px;color:#fff;font-weight:400;letter-spacing:-0.8px;">0%</div>
<div class="t" style="left:177.7px;top:1469.29px;font-size:26px;line-height:26px;color:#1c1c1c;font-weight:400;letter-spacing:-1px;">MTE</div>
<div class="t" style="left:364px;top:1469.29px;font-size:26px;line-height:26px;color:#1c1c1c;font-weight:400;letter-spacing:0px;">2022-08-19 00:00:00</div>
<div class="t" style="left:672.5px;top:1469.29px;font-size:26px;line-height:26px;color:#1c1c1c;font-weight:400;letter-spacing:0px;">2022-08-26 11:09:21</div>
<div class="r" style="left:974px;top:1471.5px;width:2627px;height:20px;background:#ffa800;"></div>
<div class="r" style="left:3708px;top:1468.3px;width:44px;height:34px;background:#ff0000;border-radius:8px;"></div>
<div class="t" style="left:3730px;transform:translateX(-50%);top:1476.06px;font-size:18px;line-height:18px;color:#fff;font-weight:400;letter-spacing:-0.8px;">0%</div>
<div class="t" style="left:177.7px;top:1531.09px;font-size:26px;line-height:26px;color:#1c1c1c;font-weight:400;letter-spacing:-1px;">NPW</div>
<div class="t" style="left:364px;top:1531.09px;font-size:26px;line-height:26px;color:#1c1c1c;font-weight:400;letter-spacing:0px;">2022-08-19 00:00:00</div>
<div class="t" style="left:672.5px;top:1531.09px;font-size:26px;line-height:26px;color:#1c1c1c;font-weight:400;letter-spacing:0px;">2022-08-26 11:09:19</div>
<div class="r" style="left:974px;top:1533.3px;width:2627px;height:20px;background:#ffa800;"></div>
<div class="r" style="left:3708px;top:1530.1px;width:44px;height:34px;background:#ff0000;border-radius:8px;"></div>
<div class="t" style="left:3730px;transform:translateX(-50%);top:1537.86px;font-size:18px;line-height:18px;color:#fff;font-weight:400;letter-spacing:-0.8px;">0%</div>
<div class="t" style="left:177.7px;top:1592.89px;font-size:26px;line-height:26px;color:#1c1c1c;font-weight:400;letter-spacing:-1px;">PLAI</div>
<div class="t" style="left:364px;top:1592.89px;font-size:26px;line-height:26px;color:#1c1c1c;font-weight:400;letter-spacing:0px;">2003-01-01 00:01:27</div>
<div class="t" style="left:672.5px;top:1592.89px;font-size:26px;line-height:26px;color:#1c1c1c;font-weight:400;letter-spacing:0px;">2022-08-26 11:09:24</div>
<div class="r" style="left:974px;top:1595.1px;width:2627px;height:20px;background:#ffa800;"></div>
<div class="r" style="left:3708px;top:1591.9px;width:44px;height:34px;background:#ff0000;border-radius:8px;"></div>
<div class="t" style="left:3730px;transform:translateX(-50%);top:1599.66px;font-size:18px;line-height:18px;color:#fff;font-weight:400;letter-spacing:-0.8px;">0%</div>
<div class="t" style="left:177.7px;top:1654.69px;font-size:26px;line-height:26px;color:#1c1c1c;font-weight:400;letter-spacing:-1px;">PSZ</div>
<div class="t" style="left:364px;top:1654.69px;font-size:26px;line-height:26px;color:#1c1c1c;font-weight:400;letter-spacing:0px;">2022-08-19 00:00:01</div>
<div class="t" style="left:672.5px;top:1654.69px;font-size:26px;line-height:26px;color:#1c1c1c;font-weight:400;letter-spacing:0px;">2022-08-26 11:09:23</div>
<div class="r" style="left:974px;top:1656.9px;width:2627px;height:20px;background:#ffa800;"></div>
<div class="r" style="left:3708px;top:1653.7px;width:44px;height:34px;background:#ff0000;border-radius:8px;"></div>
<div class="t" style="left:3730px;transform:translateX(-50%);top:1661.46px;font-size:18px;line-height:18px;color:#fff;font-weight:400;letter-spacing:-0.8px;">0%</div>
<div class="t" style="left:177.7px;top:1716.49px;font-size:26px;line-height:26px;color:#1c1c1c;font-weight:400;letter-spacing:-1px;">PUL</div>
<div class="t" style="left:364px;top:1716.49px;font-size:26px;line-height:26px;color:#1c1c1c;font-weight:400;letter-spacing:0px;">2022-08-19 00:00:02</div>
<div class="t" style="left:672.5px;top:1716.49px;font-size:26px;line-height:26px;color:#1c1c1c;font-weight:400;letter-spacing:0px;">2022-08-26 11:09:16</div>
<div class="r" style="left:974px;top:1718.7px;width:1999px;height:20px;background:#ffa800;"></div>
<div class="r" style="left:2973px;top:1715.4px;width:628px;height:27px;background:#1f6820;border:2px solid #000;box-shadow:inset 0 0 0 2px #e6e2e2;box-sizing:border-box;"></div>
<div class="r" style="left:3703.5px;top:1715.5px;width:53px;height:33px;background:#ff4a0f;border-radius:8px;"></div>
<div class="t" style="left:3730px;transform:translateX(-50%);top:1723.26px;font-size:18px;line-height:18px;color:#fff;font-weight:400;letter-spacing:-0.5px;">23%</div>
<div class="t" style="left:177.7px;top:1778.29px;font-size:26px;line-height:26px;color:#1c1c1c;font-weight:400;letter-spacing:-1px;">RGN</div>
<div class="t" style="left:364px;top:1778.29px;font-size:26px;line-height:26px;color:#1c1c1c;font-weight:400;letter-spacing:0px;">2022-08-19 00:00:00</div>
<div class="t" style="left:672.5px;top:1778.29px;font-size:26px;line-height:26px;color:#1c1c1c;font-weight:400;letter-spacing:0px;">2022-08-26 11:09:20</div>
<div class="r" style="left:974px;top:1780.5px;width:2627px;height:20px;background:#ffa800;"></div>
<div class="r" style="left:3708px;top:1777.3px;width:44px;height:34px;background:#ff0000;border-radius:8px;"></div>
<div class="t" style="left:3730px;transform:translateX(-50%);top:1785.06px;font-size:18px;line-height:18px;color:#fff;font-weight:400;letter-spacing:-0.8px;">0%</div>
<div class="t" style="left:177.7px;top:1840.09px;font-size:26px;line-height:26px;color:#1c1c1c;font-weight:400;letter-spacing:-1px;">SALTA</div>
<div class="t" style="left:364px;top:1840.09px;font-size:26px;line-height:26px;color:#1c1c1c;font-weight:400;letter-spacing:0px;">2022-08-19 00:00:00</div>
<div class="t" style="left:672.5px;top:1840.09px;font-size:26px;line-height:26px;color:#1c1c1c;font-weight:400;letter-spacing:0px;">2022-08-26 11:09:25</div>
<div class="r" style="left:974px;top:1842.3px;width:2627px;height:20px;background:#ffa800;"></div>
<div class="r" style="left:3708px;top:1839.1px;width:44px;height:34px;background:#ff0000;border-radius:8px;"></div>
<div class="t" style="left:3730px;transform:translateX(-50%);top:1846.86px;font-size:18px;line-height:18px;color:#fff;font-weight:400;letter-spacing:-0.8px;">0%</div>
<div class="t" style="left:177.7px;top:1901.89px;font-size:26px;line-height:26px;color:#1c1c1c;font-weight:400;letter-spacing:-1px;">SANI</div>
<div class="t" style="left:364px;top:1901.89px;font-size:26px;line-height:26px;color:#1c1c1c;font-weight:400;letter-spacing:0px;">2003-03-06 01:05:59</div>
<div class="t" style="left:672.5px;top:1901.89px;font-size:26px;line-height:26px;color:#1c1c1c;font-weight:400;letter-spacing:0px;">2022-08-26 11:09:25</div>
<div class="r" style="left:974px;top:1904.1px;width:2627px;height:20px;background:#ffa800;"></div>
<div class="r" style="left:3708px;top:1900.9px;width:44px;height:34px;background:#ff0000;border-radius:8px;"></div>
<div class="t" style="left:3730px;transform:translateX(-50%);top:1908.66px;font-size:18px;line-height:18px;color:#fff;font-weight:400;letter-spacing:-0.8px;">0%</div>
<svg style="left:0;top:0" width="3880" height="2200" viewBox="0 0 3880 2200"><polygon points="116.0,361.9 125.3,369.4 116.0,376.9" fill="#1c1c1c"/><rect x="143.4" y="359.6" width="20" height="20" rx="2.5" fill="none" stroke="#1c1c1c" stroke-width="2.5"/><polygon points="116.0,423.7 125.3,431.2 116.0,438.7" fill="#1c1c1c"/><rect x="143.4" y="421.4" width="20" height="20" rx="2.5" fill="none" stroke="#1c1c1c" stroke-width="2.5"/><polygon points="116.0,485.5 125.3,493.0 116.0,500.5" fill="#1c1c1c"/><rect x="143.4" y="483.2" width="20" height="20" rx="2.5" fill="none" stroke="#1c1c1c" stroke-width="2.5"/><polygon points="116.0,547.3 125.3,554.8 116.0,562.3" fill="#1c1c1c"/><rect x="143.4" y="545.0" width="20" height="20" rx="2.5" fill="none" stroke="#1c1c1c" stroke-width="2.5"/><polygon points="116.0,609.1 125.3,616.6 116.0,624.1" fill="#1c1c1c"/><rect x="143.4" y="606.8" width="20" height="20" rx="2.5" fill="none" stroke="#1c1c1c" stroke-width="2.5"/><polygon points="116.0,670.9 125.3,678.4 116.0,685.9" fill="#1c1c1c"/><rect x="143.4" y="668.6" width="20" height="20" rx="2.5" fill="none" stroke="#1c1c1c" stroke-width="2.5"/><polygon points="113.4,736.2 128.6,736.2 121.0,745.2" fill="#1c1c1c"/><rect x="143.4" y="730.4" width="20" height="20" rx="2.5" fill="none" stroke="#1c1c1c" stroke-width="2.5"/><rect x="147.2" y="738.5" width="12.4" height="3.3" fill="#1c1c1c"/><polygon points="145.5,798.0 160.7,798.0 153.1,807.0" fill="#1c1c1c"/><rect x="175.5" y="792.2" width="20" height="20" rx="2.5" fill="none" stroke="#1c1c1c" stroke-width="2.5"/><rect x="179.3" y="800.3" width="12.4" height="3.3" fill="#1c1c1c"/><rect x="207.6" y="854.0" width="20" height="20" rx="2.5" fill="none" stroke="#1c1c1c" stroke-width="2.5"/><rect x="207.6" y="915.8" width="20" height="20" rx="2.5" fill="none" stroke="#1c1c1c" stroke-width="2.5"/><rect x="207.6" y="977.6" width="20" height="20" rx="2.5" fill="none" stroke="#1c1c1c" stroke-width="2.5"/><rect x="207.6" y="1039.4" width="20" height="20" rx="2.5" fill="none" stroke="#1c1c1c" stroke-width="2.5"/><rect x="207.6" y="1101.2" width="20" height="20" rx="2.5" fill="none" stroke="#1c1c1c" stroke-width="2.5"/><rect x="207.6" y="1163.0" width="20" height="20" rx="2.5" fill="none" stroke="#1c1c1c" stroke-width="2.5"/><rect x="207.6" y="1224.8" width="20" height="20" rx="2.5" fill="none" stroke="#1c1c1c" stroke-width="2.5"/><polyline points="211.9,1235.1 215.9,1239.1 223.4,1230.6" fill="none" stroke="#1c1c1c" stroke-width="2.6"/><rect x="207.6" y="1286.6" width="20" height="20" rx="2.5" fill="none" stroke="#1c1c1c" stroke-width="2.5"/><polyline points="211.9,1296.9 215.9,1300.9 223.4,1292.4" fill="none" stroke="#1c1c1c" stroke-width="2.6"/><rect x="207.6" y="1348.4" width="20" height="20" rx="2.5" fill="none" stroke="#1c1c1c" stroke-width="2.5"/><polyline points="211.9,1358.7 215.9,1362.7 223.4,1354.2" fill="none" stroke="#1c1c1c" stroke-width="2.6"/><polygon points="116.0,1412.5 125.3,1420.0 116.0,1427.5" fill="#1c1c1c"/><rect x="143.4" y="1410.2" width="20" height="20" rx="2.5" fill="none" stroke="#1c1c1c" stroke-width="2.5"/><polygon points="116.0,1474.3 125.3,1481.8 116.0,1489.3" fill="#1c1c1c"/><rect x="143.4" y="1472.0" width="20" height="20" rx="2.5" fill="none" stroke="#1c1c1c" stroke-width="2.5"/><polygon points="116.0,1536.1 125.3,1543.6 116.0,1551.1" fill="#1c1c1c"/><rect x="143.4" y="1533.8" width="20" height="20" rx="2.5" fill="none" stroke="#1c1c1c" stroke-width="2.5"/><polygon points="116.0,1597.9 125.3,1605.4 116.0,1612.9" fill="#1c1c1c"/><rect x="143.4" y="1595.6" width="20" height="20" rx="2.5" fill="none" stroke="#1c1c1c" stroke-width="2.5"/><polygon points="116.0,1659.7 125.3,1667.2 116.0,1674.7" fill="#1c1c1c"/><rect x="143.4" y="1657.4" width="20" height="20" rx="2.5" fill="none" stroke="#1c1c1c" stroke-width="2.5"/><polygon points="116.0,1721.5 125.3,1729.0 116.0,1736.5" fill="#1c1c1c"/><rect x="143.4" y="1719.2" width="20" height="20" rx="2.5" fill="none" stroke="#1c1c1c" stroke-width="2.5"/><polygon points="116.0,1783.3 125.3,1790.8 116.0,1798.3" fill="#1c1c1c"/><rect x="143.4" y="1781.0" width="20" height="20" rx="2.5" fill="none" stroke="#1c1c1c" stroke-width="2.5"/><polygon points="116.0,1845.1 125.3,1852.6 116.0,1860.1" fill="#1c1c1c"/><rect x="143.4" y="1842.8" width="20" height="20" rx="2.5" fill="none" stroke="#1c1c1c" stroke-width="2.5"/><polygon points="116.0,1906.9 125.3,1914.4 116.0,1921.9" fill="#1c1c1c"/><rect x="143.4" y="1904.6" width="20" height="20" rx="2.5" fill="none" stroke="#1c1c1c" stroke-width="2.5"/></svg>
<div class="r" style="left:47px;top:1945px;width:3786px;height:114px;background:#ffffff;border-radius:0 0 4px 4px;"></div>
<div class="r" style="left:1174px;top:1945px;width:1px;height:12px;background:repeating-linear-gradient(to bottom,#8e8e8e 0 2px,transparent 2px 6px);background-position:0 5px;"></div>
<div class="r" style="left:1402px;top:1945px;width:1px;height:12px;background:repeating-linear-gradient(to bottom,#8e8e8e 0 2px,transparent 2px 6px);background-position:0 5px;"></div>
<div class="r" style="left:1630px;top:1945px;width:1px;height:12px;background:repeating-linear-gradient(to bottom,#8e8e8e 0 2px,transparent 2px 6px);background-position:0 5px;"></div>
<div class="r" style="left:1859px;top:1945px;width:1px;height:12px;background:repeating-linear-gradient(to bottom,#8e8e8e 0 2px,transparent 2px 6px);background-position:0 5px;"></div>
<div class="r" style="left:2087px;top:1945px;width:1px;height:12px;background:repeating-linear-gradient(to bottom,#8e8e8e 0 2px,transparent 2px 6px);background-position:0 5px;"></div>
<div class="r" style="left:2316px;top:1945px;width:1px;height:12px;background:repeating-linear-gradient(to bottom,#8e8e8e 0 2px,transparent 2px 6px);background-position:0 5px;"></div>
<div class="r" style="left:2544px;top:1945px;width:1px;height:12px;background:repeating-linear-gradient(to bottom,#8e8e8e 0 2px,transparent 2px 6px);background-position:0 5px;"></div>
<div class="r" style="left:2772px;top:1945px;width:1px;height:12px;background:repeating-linear-gradient(to bottom,#8e8e8e 0 2px,transparent 2px 6px);background-position:0 5px;"></div>
<div class="r" style="left:3003px;top:1945px;width:1px;height:12px;background:repeating-linear-gradient(to bottom,#8e8e8e 0 2px,transparent 2px 6px);background-position:0 5px;"></div>
<div class="r" style="left:3231px;top:1945px;width:1px;height:12px;background:repeating-linear-gradient(to bottom,#8e8e8e 0 2px,transparent 2px 6px);background-position:0 5px;"></div>
<div class="r" style="left:3459px;top:1945px;width:1px;height:12px;background:repeating-linear-gradient(to bottom,#8e8e8e 0 2px,transparent 2px 6px);background-position:0 5px;"></div>
<div class="r" style="left:47px;top:1956px;width:3786px;height:1px;background:#c9d3da;"></div>
<div class="r" style="left:974px;top:1957px;width:2627px;height:2px;background:#111;"></div>
<svg style="left:0;top:0" width="3880" height="2200" viewBox="0 0 3880 2200"><line x1="992.10" y1="1957" x2="992.10" y2="1971" stroke="#111" stroke-width="1.9"/><line x1="1037.70" y1="1957" x2="1037.70" y2="1971" stroke="#111" stroke-width="1.9"/><line x1="1083.30" y1="1957" x2="1083.30" y2="1971" stroke="#111" stroke-width="1.9"/><line x1="1128.90" y1="1957" x2="1128.90" y2="1971" stroke="#111" stroke-width="1.9"/><line x1="1174.50" y1="1957" x2="1174.50" y2="1983.5" stroke="#111" stroke-width="1.9"/><line x1="1220.10" y1="1957" x2="1220.10" y2="1971" stroke="#111" stroke-width="1.9"/><line x1="1265.70" y1="1957" x2="1265.70" y2="1971" stroke="#111" stroke-width="1.9"/><line x1="1311.30" y1="1957" x2="1311.30" y2="1971" stroke="#111" stroke-width="1.9"/><line x1="1356.90" y1="1957" x2="1356.90" y2="1971" stroke="#111" stroke-width="1.9"/><line x1="1402.50" y1="1957" x2="1402.50" y2="1983.5" stroke="#111" stroke-width="1.9"/><line x1="1448.10" y1="1957" x2="1448.10" y2="1971" stroke="#111" stroke-width="1.9"/><line x1="1493.70" y1="1957" x2="1493.70" y2="1971" stroke="#111" stroke-width="1.9"/><line x1="1539.30" y1="1957" x2="1539.30" y2="1971" stroke="#111" stroke-width="1.9"/><line x1="1584.90" y1="1957" x2="1584.90" y2="1971" stroke="#111" stroke-width="1.9"/><line x1="1630.50" y1="1957" x2="1630.50" y2="1983.5" stroke="#111" stroke-width="1.9"/><line x1="1676.30" y1="1957" x2="1676.30" y2="1971" stroke="#111" stroke-width="1.9"/><line x1="1722.10" y1="1957" x2="1722.10" y2="1971" stroke="#111" stroke-width="1.9"/><line x1="1767.90" y1="1957" x2="1767.90" y2="1971" stroke="#111" stroke-width="1.9"/><line x1="1813.70" y1="1957" x2="1813.70" y2="1971" stroke="#111" stroke-width="1.9"/><line x1="1859.50" y1="1957" x2="1859.50" y2="1983.5" stroke="#111" stroke-width="1.9"/><line x1="1905.10" y1="1957" x2="1905.10" y2="1971" stroke="#111" stroke-width="1.9"/><line x1="1950.70" y1="1957" x2="1950.70" y2="1971" stroke="#111" stroke-width="1.9"/><line x1="1996.30" y1="1957" x2="1996.30" y2="1971" stroke="#111" stroke-width="1.9"/><line x1="2041.90" y1="1957" x2="2041.90" y2="1971" stroke="#111" stroke-width="1.9"/><line x1="2087.50" y1="1957" x2="2087.50" y2="1983.5" stroke="#111" stroke-width="1.9"/><line x1="2133.30" y1="1957" x2="2133.30" y2="1971" stroke="#111" stroke-width="1.9"/><line x1="2179.10" y1="1957" x2="2179.10" y2="1971" stroke="#111" stroke-width="1.9"/><line x1="2224.90" y1="1957" x2="2224.90" y2="1971" stroke="#111" stroke-width="1.9"/><line x1="2270.70" y1="1957" x2="2270.70" y2="1971" stroke="#111" stroke-width="1.9"/><line x1="2316.50" y1="1957" x2="2316.50" y2="1983.5" stroke="#111" stroke-width="1.9"/><line x1="2362.10" y1="1957" x2="2362.10" y2="1971" stroke="#111" stroke-width="1.9"/><line x1="2407.70" y1="1957" x2="2407.70" y2="1971" stroke="#111" stroke-width="1.9"/><line x1="2453.30" y1="1957" x2="2453.30" y2="1971" stroke="#111" stroke-width="1.9"/><line x1="2498.90" y1="1957" x2="2498.90" y2="1971" stroke="#111" stroke-width="1.9"/><line x1="2544.50" y1="1957" x2="2544.50" y2="1983.5" stroke="#111" stroke-width="1.9"/><line x1="2590.10" y1="1957" x2="2590.10" y2="1971" stroke="#111" stroke-width="1.9"/><line x1="2635.70" y1="1957" x2="2635.70" y2="1971" stroke="#111" stroke-width="1.9"/><line x1="2681.30" y1="1957" x2="2681.30" y2="1971" stroke="#111" stroke-width="1.9"/><line x1="2726.90" y1="1957" x2="2726.90" y2="1971" stroke="#111" stroke-width="1.9"/><line x1="2772.50" y1="1957" x2="2772.50" y2="1983.5" stroke="#111" stroke-width="1.9"/><line x1="2818.70" y1="1957" x2="2818.70" y2="1971" stroke="#111" stroke-width="1.9"/><line x1="2864.90" y1="1957" x2="2864.90" y2="1971" stroke="#111" stroke-width="1.9"/><line x1="2911.10" y1="1957" x2="2911.10" y2="1971" stroke="#111" stroke-width="1.9"/><line x1="2957.30" y1="1957" x2="2957.30" y2="1971" stroke="#111" stroke-width="1.9"/><line x1="3003.50" y1="1957" x2="3003.50" y2="1983.5" stroke="#111" stroke-width="1.9"/><line x1="3049.10" y1="1957" x2="3049.10" y2="1971" stroke="#111" stroke-width="1.9"/><line x1="3094.70" y1="1957" x2="3094.70" y2="1971" stroke="#111" stroke-width="1.9"/><line x1="3140.30" y1="1957" x2="3140.30" y2="1971" stroke="#111" stroke-width="1.9"/><line x1="3185.90" y1="1957" x2="3185.90" y2="1971" stroke="#111" stroke-width="1.9"/><line x1="3231.50" y1="1957" x2="3231.50" y2="1983.5" stroke="#111" stroke-width="1.9"/><line x1="3277.10" y1="1957" x2="3277.10" y2="1971" stroke="#111" stroke-width="1.9"/><line x1="3322.70" y1="1957" x2="3322.70" y2="1971" stroke="#111" stroke-width="1.9"/><line x1="3368.30" y1="1957" x2="3368.30" y2="1971" stroke="#111" stroke-width="1.9"/><line x1="3413.90" y1="1957" x2="3413.90" y2="1971" stroke="#111" stroke-width="1.9"/><line x1="3459.50" y1="1957" x2="3459.50" y2="1983.5" stroke="#111" stroke-width="1.9"/><line x1="3505.10" y1="1957" x2="3505.10" y2="1971" stroke="#111" stroke-width="1.9"/><line x1="3550.70" y1="1957" x2="3550.70" y2="1971" stroke="#111" stroke-width="1.9"/><line x1="3596.30" y1="1957" x2="3596.30" y2="1971" stroke="#111" stroke-width="1.9"/></svg>
<div class="t" style="left:1174.5px;transform:translateX(-50%);top:1994.64px;font-size:25px;line-height:25px;color:#1a1a1a;font-weight:400;letter-spacing:0.2px;">04:05:00</div>
<div class="t" style="left:1402.5px;transform:translateX(-50%);top:1994.64px;font-size:25px;line-height:25px;color:#1a1a1a;font-weight:400;letter-spacing:0.2px;">04:10:00</div>
<div class="t" style="left:1630.5px;transform:translateX(-50%);top:1994.64px;font-size:25px;line-height:25px;color:#1a1a1a;font-weight:400;letter-spacing:0.2px;">04:15:00</div>
<div class="t" style="left:1859.5px;transform:translateX(-50%);top:1994.64px;font-size:25px;line-height:25px;color:#1a1a1a;font-weight:400;letter-spacing:0.2px;">04:20:00</div>
<div class="t" style="left:2087.5px;transform:translateX(-50%);top:1994.64px;font-size:25px;line-height:25px;color:#1a1a1a;font-weight:400;letter-spacing:0.2px;">04:25:00</div>
<div class="t" style="left:2316.5px;transform:translateX(-50%);top:1994.64px;font-size:25px;line-height:25px;color:#1a1a1a;font-weight:400;letter-spacing:0.2px;">04:30:00</div>
<div class="t" style="left:2544.5px;transform:translateX(-50%);top:1994.64px;font-size:25px;line-height:25px;color:#1a1a1a;font-weight:400;letter-spacing:0.2px;">04:35:00</div>
<div class="t" style="left:2772.5px;transform:translateX(-50%);top:1994.64px;font-size:25px;line-height:25px;color:#1a1a1a;font-weight:400;letter-spacing:0.2px;">04:40:00</div>
<div class="t" style="left:3003.5px;transform:translateX(-50%);top:1994.64px;font-size:25px;line-height:25px;color:#1a1a1a;font-weight:400;letter-spacing:0.2px;">04:45:00</div>
<div class="t" style="left:3231.5px;transform:translateX(-50%);top:1994.64px;font-size:25px;line-height:25px;color:#1a1a1a;font-weight:400;letter-spacing:0.2px;">04:50:00</div>
<div class="t" style="left:3459.5px;transform:translateX(-50%);top:1994.64px;font-size:25px;line-height:25px;color:#1a1a1a;font-weight:400;letter-spacing:0.2px;">04:55:00</div>
<div class="t" style="left:1174.0px;transform:translateX(-50%);top:2032.71px;font-size:25.5px;line-height:25.5px;color:#1a1a1a;font-weight:400;letter-spacing:0.3px;">2022-08-25</div>
<div class="r" style="left:2997px;top:1756px;width:604px;height:175px;background:rgba(255,255,255,0.9);border-radius:6px;box-shadow:0 3px 10px rgba(0,0,0,0.12);"></div>
<div class="t" style="left:3022px;top:1796.26px;font-size:24.5px;line-height:24.5px;color:#2a2a2a;font-weight:400;letter-spacing:0.5px;"><b>Data availability</b> ( full )</div>
<svg style="left:0;top:0" width="3880" height="2200" viewBox="0 0 3880 2200">
<rect x="3021.7" y="1873.7" width="17" height="17" fill="#fff" stroke="#000" stroke-width="1.4"/>
<rect x="3024.3" y="1876.3" width="11.8" height="11.8" fill="#1f6820"/>
<rect x="3168.7" y="1873.7" width="16" height="17" fill="#ffa800" stroke="#2c3e5a" stroke-width="1.2"/>
<rect x="3359.7" y="1873.7" width="16.5" height="17" fill="#ffff00" stroke="#2c3e5a" stroke-width="1.2"/>
<rect x="3442.7" y="1873.7" width="16.5" height="17" fill="#808080" stroke="#2c3e5a" stroke-width="1.2"/>
</svg>
<div class="t" style="left:3052px;top:1871.14px;font-size:25px;line-height:25px;color:#2a2a2a;font-weight:400;letter-spacing:0.5px;">complete</div>
<div class="t" style="left:3198.4px;top:1871.14px;font-size:25px;line-height:25px;color:#2a2a2a;font-weight:400;letter-spacing:0.4px;">partial or gap</div>
<div class="t" style="left:3389.3px;top:1871.14px;font-size:25px;line-height:25px;color:#2a2a2a;font-weight:400;letter-spacing:0px;">gap</div>
<div class="t" style="left:3472.5px;top:1871.14px;font-size:25px;line-height:25px;color:#2a2a2a;font-weight:400;letter-spacing:0.8px;">unknown</div>
<div class="r" style="left:20px;top:2087px;width:3840px;height:93px;background:#dde4e7;"></div>
<div class="t" style="left:1940px;transform:translateX(-50%);top:2121.99px;font-size:26px;line-height:26px;color:#7a7a7a;font-weight:400;letter-spacing:0.45px;">© gempa GmbH | Last updated: 2022-08-26 11:09:27</div>
</body></html>
